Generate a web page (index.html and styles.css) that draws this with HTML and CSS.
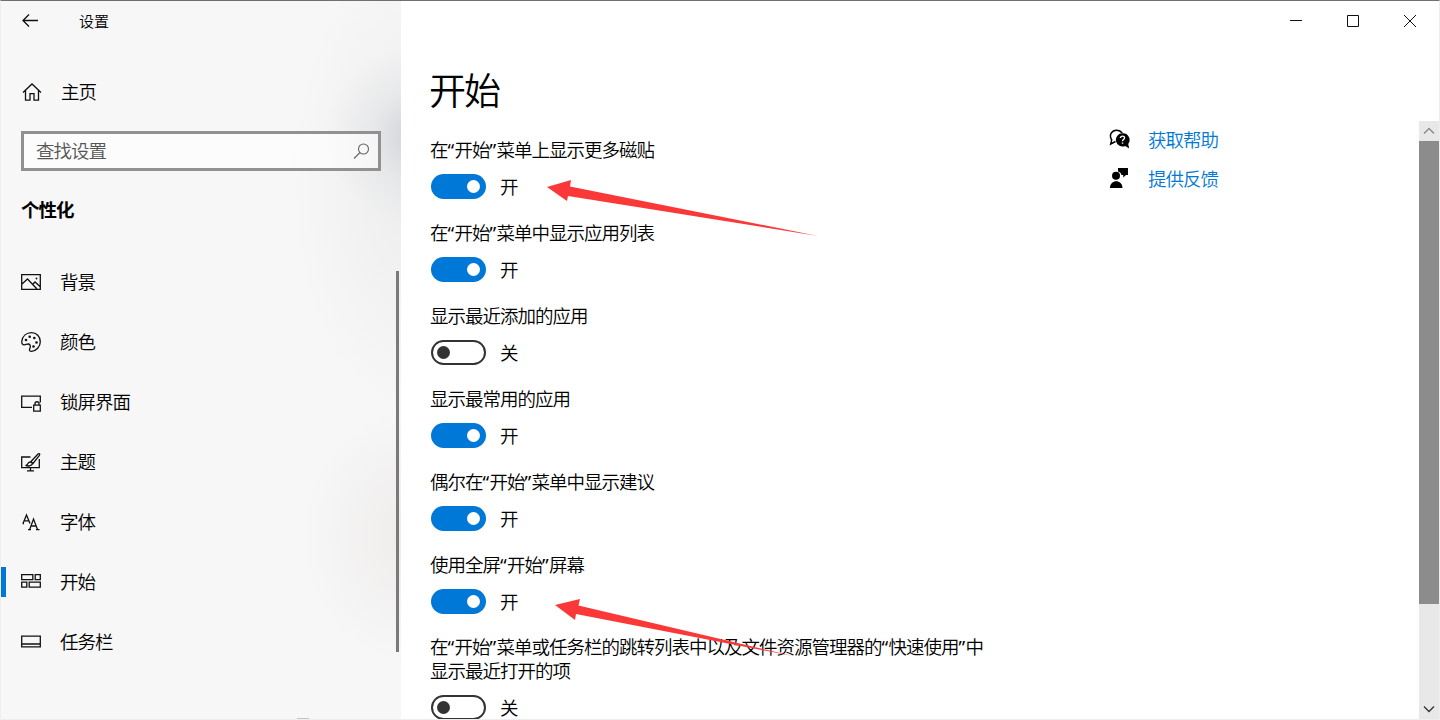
FILE: index.html
```
<!DOCTYPE html>
<html lang="zh-CN">
<head>
    <meta charset="UTF-8">
    <title>设置</title>
    <link rel="stylesheet" href="styles.css">
</head>
<body>
<div class="window">
    <!-- 左侧导航 -->
    <div class="side">
        <div class="side-top">
            <svg class="back" width="16" height="14" viewBox="0 0 16 14"><path d="M16 6.500H1M7 .5L1 6.500l6 6"/></svg>
            <span>设置</span>
        </div>
        <div class="home">
            <svg width="20" height="20" viewBox="0 0 20 20"><path d="M1 10.500L10 2l9 8.500M3.500 8.500V18.200H8v-6.500h4v6.500h4.500V8.500"/></svg>
            <span>主页</span>
        </div>
        <div class="search">
            <span>查找设置</span>
            <svg width="17" height="17" viewBox="0 0 17 17"><circle cx="10.500" cy="6" r="5"/><path d="M7 9.500L1 15.500"/></svg>
        </div>
        <h2>个性化</h2>
        <ul class="nav">
            <li>
                <svg width="20" height="20" viewBox="0 0 20 20"><path d="M.7 2.700h18.600v14.600H.7zM1 12l5.500-5L16 17M11.500 12.500L14 10l5 4.500"/><circle class="dot" cx="15.500" cy="6.500" r=".9"/></svg>
                <span>背景</span>
            </li>
            <li>
                <svg width="20" height="20" viewBox="0 0 20 20"><path d="M.8 9.500C1.500 4 5.500.7 10.500.7c5 0 8.800 3.800 8.800 9 0 5-4 9.300-8.800 9.600-3 .1-2-2-1.400-3.600.6-2-.1-3.700-2-3.700-1.700 0-2.300 1-4 .9C1.500 12.800.6 11.500.8 9.500z"/><g class="dot"><circle cx="5" cy="8" r="1.300"/><circle cx="8.700" cy="4.800" r="1.300"/><circle cx="13.300" cy="6" r="1.300"/><circle cx="15.500" cy="10.500" r="1.300"/><circle cx="12.500" cy="14.500" r="1.300"/></g></svg>
                <span>颜色</span>
            </li>
            <li>
                <svg width="20" height="20" viewBox="0 0 20 20"><path d="M11 15.300H.7V4.200h18.600v6.300M12.700 13.200h6.600v6h-6.600zM14 13v-1.300c0-2.600 4-2.600 4 0V13"/></svg>
                <span>锁屏界面</span>
            </li>
            <li>
                <svg width="20" height="20" viewBox="0 0 20 20"><path d="M9.500 5H.7v10.700h17.600V7M9.500 16v2.800M6 18.800h7M10 9.500l7-7.500c1.200-1 2.300 0 1.400 1.300L12 11.500zM9.500 10c-2-.2-2.500 1-3 2.200-.3.800-1 1.200-2 1.200 2.500 1.200 6 .6 7.200-1.900z"/></svg>
                <span>主题</span>
            </li>
            <li>
                <svg width="20" height="20" viewBox="0 0 20 20"><path d="M2 11.500L5.500 3 9 11.500M3.300 8.800h4.500M8.700 17.500L12.500 7l4 10.500M9.800 14h5.300M1.500 11.700h1.500M7 17.700h3M15 17.700h3.500"/></svg>
                <span>字体</span>
            </li>
            <li class="current">
                <svg width="20" height="20" viewBox="0 0 20 20"><path d="M.7 2.700h11.100v5H.7zM14.200 2.700h5.100v5h-5.100zM.7 10.200h5.100v5H.7zM8.200 10.200h11.100v5H8.200z"/></svg>
                <span>开始</span>
            </li>
            <li>
                <svg width="20" height="20" viewBox="0 0 20 20"><path d="M.7 4.200h18.600v10.600H.7zM.7 12h18.600"/></svg>
                <span>任务栏</span>
            </li>
        </ul>
        <div class="side-bar"></div>
        <div class="edge"></div>
    </div>

    <!-- 右侧内容 -->
    <div class="main">
        <div class="caption">
            <svg width="12" height="12" viewBox="0 0 12 12"><path d="M0 5.500h12"/></svg>
            <svg width="12" height="12" viewBox="0 0 12 12"><path d="M.5.5h11v11H.5z"/></svg>
            <svg width="12" height="12" viewBox="0 0 12 12"><path d="M0 0l12 12M12 0L0 12"/></svg>
        </div>
        <h1>开始</h1>
        <div class="content">
            <div class="list">
                <div class="item">
                    <p>在<b>“</b>开始<b>”</b>菜单上显示更多磁贴</p>
                    <div class="row"><i class="switch on"></i><span>开</span></div>
                </div>
                <div class="item">
                    <p>在<b>“</b>开始<b>”</b>菜单中显示应用列表</p>
                    <div class="row"><i class="switch on"></i><span>开</span></div>
                </div>
                <div class="item">
                    <p>显示最近添加的应用</p>
                    <div class="row"><i class="switch"></i><span>关</span></div>
                </div>
                <div class="item">
                    <p>显示最常用的应用</p>
                    <div class="row"><i class="switch on"></i><span>开</span></div>
                </div>
                <div class="item">
                    <p>偶尔在<b>“</b>开始<b>”</b>菜单中显示建议</p>
                    <div class="row"><i class="switch on"></i><span>开</span></div>
                </div>
                <div class="item">
                    <p>使用全屏<b>“</b>开始<b>”</b>屏幕</p>
                    <div class="row"><i class="switch on"></i><span>开</span></div>
                </div>
                <div class="item last">
                    <p>在<b>“</b>开始<b>”</b>菜单或任务栏的跳转列表中以及文件资源管理器的<b>“</b>快速使用<b>”</b>中<br>显示最近打开的项</p>
                    <div class="row"><i class="switch"></i><span>关</span></div>
                </div>
            </div>
            <div class="links">
                <a>
                    <svg width="21" height="21" viewBox="0 0 21 21"><path class="line" d="M6.500 12.500L1.700 15l1-4C-.5 6 3 1.200 7.500 1.200c2.500 0 4.500 1 5.700 3"/><path d="M13.500 4.300a6.600 6.600 0 1 0 2.700 12.600l4 2.600-1-4.600A6.600 6.600 0 0 0 13.500 4.300z"/><path class="mark" d="M11.400 9c.2-2.600 4.200-2.500 4.100-.1 0 1.600-2 1.500-2 3.300M13.500 13.400v1.400"/></svg>
                    <span>获取帮助</span>
                </a>
                <a>
                    <svg width="21" height="21" viewBox="0 0 21 21"><circle cx="7" cy="7.800" r="4"/><path d="M1 20c0-9 12.500-9 12.500 0zM9 0h10v7h-2l-2.800 2.500V7h-1.700c-.4-1.800-1.600-3-3.500-3.500z"/></svg>
                    <span>提供反馈</span>
                </a>
            </div>
            <div class="scroll">
                <svg width="20" height="20" viewBox="0 0 20 20"><path d="M5 12.500l5-5 5 5"/></svg>
                <div class="thumb"></div>
                <svg class="down" width="20" height="20" viewBox="0 0 20 20"><path d="M5 7.500l5 5 5-5"/></svg>
            </div>
        </div>
    </div>

    <!-- 红色箭头标注 -->
    <svg class="arrows" width="1440" height="720" viewBox="0 0 1440 720">
        <path d="M547 187l24-7-1 6.500 248 49.500-250-40-1 5z"/>
        <path d="M555 605l25-6-1.500 6.500L793 656 576 614l-1 6z"/>
    </svg>
    <div class="grip"></div>
</div>
</body>
</html>
```
FILE: styles.css
```
*{
    margin: 0;
    padding: 0;
    box-sizing: border-box;
}
body{
    font-family: "Noto Sans", "Noto Sans CJK SC", sans-serif;
    font-size: 18.5px;
    font-weight: 350;
    letter-spacing: -1px;
    line-height: 24px;
    color: #000;
    overflow: hidden;
}
svg{
    display: block;
    flex: none;
    fill: none;
    stroke: #111;
    stroke-width: 1.3;
}
.window{
    position: relative;
    display: flex;
    width: 1440px;
    height: 720px;
    border: 1px solid #eee;
    border-top-color: #707070;
    background: #fff;
    overflow: hidden;
}
/* 左侧 */
.side{
    position: relative;
    width: 400px;
    background:
        radial-gradient(ellipse 90px 90px at 415px 135px, rgba(196,199,205,.7), rgba(212,214,218,.3) 50%, transparent),
        radial-gradient(ellipse 130px 240px at 420px 180px, rgba(215,217,220,.35), transparent),
        radial-gradient(ellipse 120px 130px at 420px 535px, rgba(232,228,226,.6), transparent),
        #f7f7f7;
}
.side-top{
    display: flex;
    align-items: center;
    gap: 41px;
    height: 40px;
    padding-left: 21px;
    font-size: 15px;
    letter-spacing: 0;
}
.home{
    display: flex;
    align-items: center;
    gap: 19px;
    height: 40px;
    margin-top: 31px;
    padding-left: 21px;
}
.search{
    display: flex;
    align-items: center;
    justify-content: space-between;
    width: 360px;
    height: 40px;
    margin: 19px 0 0 20px;
    padding: 0 8px 0 12px;
    border: 3px solid #919191;
    background: rgba(255,255,255,.6);
    color: #555;
}
.search svg{
    stroke: #666;
    stroke-width: 1.1;
}
h2{
    margin: 27px 0 0 20px;
    font-size: 18.5px;
    font-weight: 700;
    line-height: 24px;
}
.nav{
    margin-top: 30px;
    list-style: none;
}
.nav li{
    display: flex;
    align-items: center;
    gap: 19px;
    height: 60px;
    padding-left: 20px;
}
.nav .dot{
    fill: #111;
    stroke: none;
}
.nav .current:before{
    content: "";
    width: 5px;
    height: 30px;
    margin-left: -20px;
    margin-right: -4px;
    background: #0078d7;
}
.side-bar{
    position: absolute;
    top: 270px;
    right: 2px;
    width: 3px;
    height: 381px;
    background: #7a7a7a;
}
.edge{
    position: absolute;
    left: 296px;
    bottom: 0;
    width: 12px;
    height: 1px;
    background: #c3c5cb;
}
/* 右侧 */
.main{
    display: flex;
    flex-direction: column;
    flex: 1;
}
.caption{
    display: flex;
    justify-content: flex-end;
    gap: 45px;
    height: 40px;
    padding: 14px 23px 0 0;
}
.caption svg{
    stroke-width: 1;
}
h1{
    height: 80px;
    padding: 26px 0 0 28px;
    font-size: 37px;
    font-weight: 350;
    line-height: 48px;
    letter-spacing: -2px;
}
.content{
    display: flex;
    height: 598px;
    overflow: hidden;
}
.list{
    width: 708px;
    padding: 17px 0 0 30px;
}
.item{
    margin-bottom: 22px;
}
.item.last{
    margin-top: -1px;
}
.item p{
    margin-left: -1px;
}
.item b{
    display: inline-block;
    width: 7px;
    font-weight: 400;
}
.row{
    display: flex;
    gap: 14px;
    height: 25px;
    margin-top: 12px;
}
.row span{
    padding-top: 1px;
}
.switch{
    position: relative;
    width: 55px;
    height: 25px;
    border: 2.5px solid #333;
    border-radius: 13px;
}
.switch:after{
    content: "";
    position: absolute;
    left: 4px;
    top: 4px;
    width: 13px;
    height: 13px;
    border-radius: 50%;
    background: #333;
}
.switch.on{
    border-color: #0078d7;
    background: #0078d7;
}
.switch.on:after{
    left: 34px;
    background: #fff;
}
.links{
    flex: 1;
    margin-top: -1px;
}
.links a{
    display: flex;
    align-items: center;
    gap: 18px;
    height: 39px;
    color: #0078d7;
}
.links svg{
    fill: #000;
    stroke: none;
}
.links .line{
    fill: none;
    stroke: #000;
    stroke-width: 1.5;
}
.links .mark{
    fill: none;
    stroke: #fff;
    stroke-width: 1.4;
}
.scroll{
    display: flex;
    flex-direction: column;
    width: 20px;
    background: #e8e8e8;
}
.scroll svg{
    stroke: #888;
}
.scroll .down{
    margin-top: auto;
    stroke: #333;
}
.thumb{
    height: 463px;
    background: #8c8c8c;
}
.arrows{
    position: absolute;
    left: -1px;
    top: -1px;
    fill: #fb3838;
    stroke: none;
}
.grip{
    position: absolute;
    right: -1px;
    top: 482px;
    width: 1px;
    height: 16px;
    background: repeating-linear-gradient(#222 0, #222 2px, #fff 2px, #fff 4px);
}
```
